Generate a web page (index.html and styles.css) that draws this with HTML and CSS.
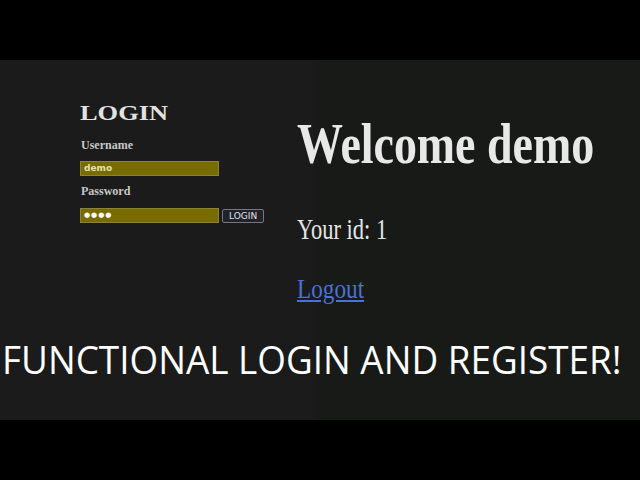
FILE: index.html
```html
<!DOCTYPE html>
<html>
<head>
<meta charset="utf-8">
<link rel="stylesheet" href="styles.css">
</head>
<body>
<div class="frame">
  <div class="bar"></div>
  <div class="screen">
    <div class="row">
      <div class="login">
        <div class="login-title"><span class="sx sx-login">LOGIN</span></div>
        <div class="label label-first">Username</div>
        <div class="field">demo</div>
        <div class="label">Password</div>
        <div class="pw-row">
          <div class="field field-pw">&#9679;&#9679;&#9679;&#9679;</div>
          <div class="btn">LOGIN</div>
        </div>
      </div>
      <div class="welcome">
        <h1 class="title"><span class="sx sx-title">Welcome demo</span></h1>
        <p class="uid"><span class="sx sx-uid">Your id: 1</span></p>
        <a class="logout" href="#"><span class="sx sx-logout">Logout</span></a>
      </div>
    </div>
    <div class="caption"><span class="sx sx-caption">FUNCTIONAL LOGIN AND REGISTER!</span></div>
  </div>
  <div class="bar"></div>
</div>
</body>
</html>
```

FILE: styles.css
```css
html, body {
  margin: 0;
  padding: 0;
  background: #000;
}
.frame {
  width: 640px;
  height: 480px;
  display: flex;
  flex-direction: column;
}
.bar {
  height: 60px;
  background: #000;
}
.screen {
  height: 360px;
  background: linear-gradient(90deg, #1b1b1b 0%, #1b1b1b 48%, #181a18 50%, #181a18 100%);
  display: flex;
  flex-direction: column;
}
.row {
  height: 280px;
  display: flex;
}
.sx {
  display: inline-block;
  transform-origin: left center;
  white-space: nowrap;
}
.login {
  flex: 0 0 297px;
  padding: 42px 0 0 80px;
  box-sizing: border-box;
  display: flex;
  flex-direction: column;
  align-items: flex-start;
}
.login-title {
  font-family: "Liberation Serif", serif;
  font-weight: bold;
  font-size: 22px;
  line-height: 1;
  color: #e2e2e2;
}
.sx-login {
  transform: scaleX(1.2);
}
.label {
  font-family: "Liberation Serif", serif;
  font-weight: bold;
  font-size: 12px;
  line-height: 1;
  color: #c8c8c8;
  margin-top: 9px;
  padding-left: 1px;
}
.label-first {
  margin-top: 15px;
}
.field {
  width: 139px;
  height: 15px;
  box-sizing: border-box;
  margin-top: 10px;
  background: #786c00;
  border: 1px solid #8c8338;
  font-family: "DejaVu Sans", sans-serif;
  font-weight: bold;
  font-size: 9px;
  line-height: 13px;
  padding-left: 3px;
  color: #e6e0b0;
}
.pw-row {
  display: flex;
  align-items: flex-start;
  gap: 3px;
  margin-top: 11px;
}
.pw-row .field {
  margin-top: 0;
}
.field-pw {
  font-size: 7px;
  letter-spacing: 1px;
  color: #fff;
}
.btn {
  height: 14px;
  box-sizing: border-box;
  padding: 0 6px;
  margin-top: 1px;
  background: #1f212b;
  border: 1px solid #777;
  border-radius: 2px;
  font-family: "DejaVu Sans", sans-serif;
  font-size: 9px;
  line-height: 12px;
  color: #e0e0e0;
}
.welcome {
  flex: 1 1 auto;
  min-width: 0;
  padding-top: 56px;
  display: flex;
  flex-direction: column;
  align-items: flex-start;
}
.title {
  margin: 0;
  font-family: "Liberation Serif", serif;
  font-weight: bold;
  font-size: 56px;
  line-height: 1;
  color: #e8e8e8;
}
.sx-title {
  transform: scaleX(0.82);
}
.uid {
  margin: 42px 0 0;
  font-family: "Liberation Serif", serif;
  font-size: 30px;
  line-height: 1;
  color: #e6e6e6;
}
.sx-uid {
  transform: scaleX(0.75);
}
.logout {
  margin-top: 31px;
  font-family: "Liberation Serif", serif;
  font-size: 28px;
  line-height: 1;
  color: #4a72d6;
  text-decoration: underline;
}
.sx-logout {
  transform: scaleX(0.83);
  text-decoration: underline;
}
.caption {
  padding-left: 2px;
  font-family: "Open Sans", sans-serif;
  font-size: 38px;
  line-height: 1;
  color: #fff;
}
.sx-caption {
  transform: scaleX(0.97);
}
```
